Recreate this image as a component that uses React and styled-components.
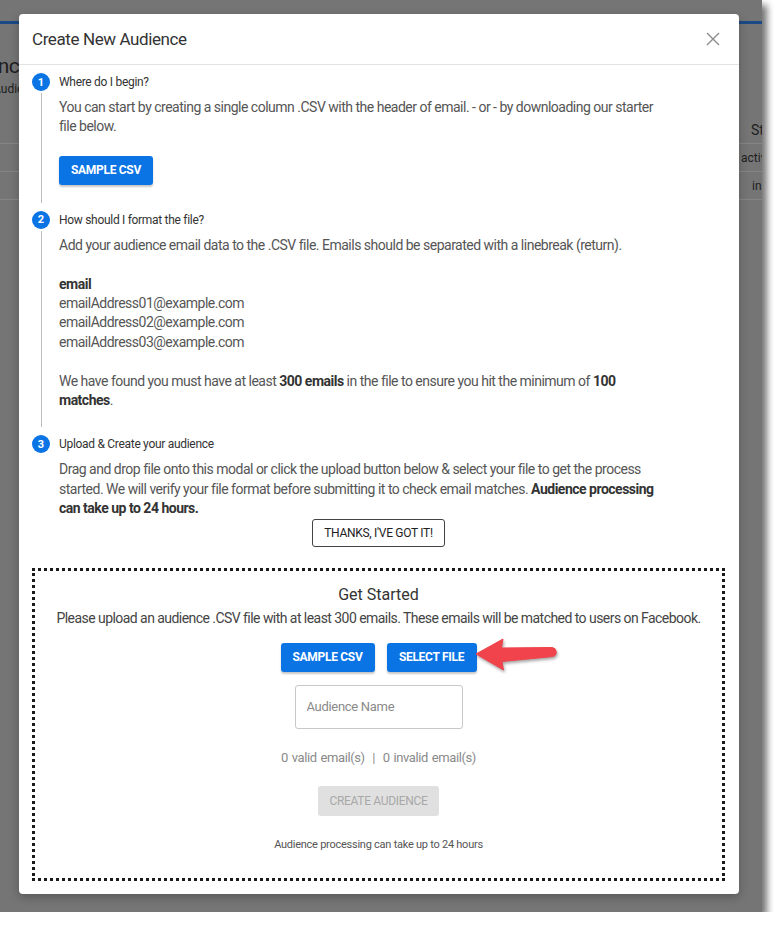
import React from 'react'
import styled, {createGlobalStyle} from 'styled-components'

const GlobalStyle = createGlobalStyle`
    html, body {
        margin: 0;
        padding: 0;
        background: #fff;
    }
    body {
        font-family: Roboto, 'Liberation Sans', Arial, sans-serif;
        -webkit-font-smoothing: antialiased;
    }
`

const Shot = styled.div`
    position: relative;
    width: 762px;
    height: 912px;
    background: #757575;
    box-shadow: 5px 5px 7px rgba(0, 0, 0, 0.55);
    overflow: hidden;
`

/* dimmed app page behind the modal */
const BehindPage = styled.div`
    display: flex;
    flex-direction: column;
    padding-top: 21px;
    color: #1e1e1e;
`
const TopBar = styled.div`
    height: 3px;
    background: #1c4a86;
`
const PageHead = styled.div`
    display: flex;
    flex-direction: column;
    margin-left: -53px;
    padding-top: 30px;
    h2 {
        margin: 0;
        font-size: 21px;
        font-weight: 400;
        letter-spacing: -0.5px;
    }
    p {
        margin: 4px 0 0 0;
        font-size: 12px;
        padding-left: 46px;
    }
`
const Table = styled.div`
    display: flex;
    flex-direction: column;
    margin-top: 21px;
`
const TRow = styled.div`
    display: flex;
    justify-content: flex-end;
    align-items: center;
    height: 27px;
    border-bottom: 1px solid #868686;
    font-size: ${p => (p.head ? '14px' : '12px')};
    &:first-child {
        height: 26px;
    }
`
const TCell = styled.span`
    width: ${p => p.w}px;
    white-space: nowrap;
    overflow: hidden;
`

const Modal = styled.div`
    position: absolute;
    left: 19px;
    top: 14px;
    width: 720px;
    height: 880px;
    background: #fff;
    border-radius: 4px;
    box-shadow: 0 3px 10px rgba(0, 0, 0, 0.25);
    display: flex;
    flex-direction: column;
`
const ModalHeader = styled.div`
    display: flex;
    align-items: center;
    justify-content: space-between;
    height: 50px;
    padding: 0 19px 0 13px;
    border-bottom: 1px solid #e3e3e3;
    h3 {
        margin: 0;
        font-size: 17px;
        font-weight: 400;
        color: #333;
        letter-spacing: -0.4px;
    }
`
const CloseBtn = styled.button`
    border: 0;
    background: none;
    padding: 0;
    width: 14px;
    height: 14px;
    display: flex;
    cursor: pointer;
`
const ModalBody = styled.div`
    display: flex;
    flex-direction: column;
    padding: 8px 14px 13px 13px;
    flex: 1;
`

const Step = styled.div`
    display: flex;
    flex-direction: column;
`
const StepHead = styled.div`
    display: flex;
    align-items: center;
    gap: 9px;
    height: 18px;
    font-size: 12px;
    color: #333;
    letter-spacing: -0.3px;
`
const StepNum = styled.span`
    width: 18px;
    height: 18px;
    border-radius: 50%;
    background: #0b74e5;
    color: #fff;
    font-size: 11px;
    font-weight: 700;
    display: flex;
    align-items: center;
    justify-content: center;
    letter-spacing: 0;
`
const StepBody = styled.div`
    margin: 2px 0 ${p => (p.last ? 0 : 8)}px 9px;
    padding: 5px 0 ${p => p.pb || 0}px 17px;
    border-left: 1px solid ${p => (p.last ? 'transparent' : '#bdbdbd')};
    font-size: 14px;
    line-height: 19.4px;
    color: #555;
    letter-spacing: -0.5px;
    p {
        margin: 0;
        max-width: 600px;
    }
    b {
        color: #333;
        font-weight: 700;
    }
`
const Spacer = styled.div`
    height: ${p => p.h}px;
`
const Centered = styled.div`
    display: flex;
    justify-content: center;
    gap: ${p => p.gap || 0}px;
    margin-left: ${p => p.shift || 0}px;
`

const Button = styled.button`
    height: 29px;
    width: ${p => p.w}px;
    border: 0;
    border-radius: 3px;
    background: #0b74e5;
    color: #fff;
    font-family: inherit;
    font-size: 12px;
    font-weight: 700;
    text-transform: uppercase;
    letter-spacing: -0.3px;
    box-shadow: 0 2px 2px rgba(0, 0, 0, 0.22);
    cursor: pointer;
    padding: 0;
`
const OutlineButton = styled(Button)`
    height: 28px;
    background: #fff;
    color: #222;
    border: 1px solid #444;
    font-weight: 400;
    box-shadow: none;
`
const DisabledButton = styled(Button)`
    height: 30px;
    background: #e0e0e0;
    color: #a8a8a8;
    font-weight: 400;
    box-shadow: none;
    cursor: default;
`

const DropZone = styled.div`
    margin-top: 21px;
    border: 3px dotted #1a1a1a;
    flex: 1;
    display: flex;
    flex-direction: column;
    align-items: center;
    padding-top: 13px;
    color: #444;
    h4 {
        margin: 0;
        font-size: 16px;
        font-weight: 400;
        color: #333;
        line-height: 22px;
    }
`
const Lead = styled.p`
    margin: 4px 0 17px 0;
    font-size: 14px;
    letter-spacing: -0.55px;
    color: #444;
`
const ArrowWrap = styled.span`
    position: relative;
    display: inline-flex;
`
const Arrow = styled.svg`
    position: absolute;
    top: -5px;
    left: calc(100% - 1px);
    width: 82px;
    height: 34px;
    overflow: visible;
    filter: drop-shadow(1px 2px 1.5px rgba(0, 0, 0, 0.35));
`
const NameInput = styled.input`
    margin-top: 13px;
    width: 168px;
    height: 44px;
    box-sizing: border-box;
    border: 1px solid #c8c8c8;
    border-radius: 3px;
    padding: 0 11px;
    font-family: inherit;
    font-size: 13px;
    letter-spacing: -0.3px;
    color: #333;
    &::placeholder {
        color: #8a8a8a;
    }
`
const Counts = styled.div`
    margin-top: 21px;
    font-size: 13px;
    color: #8a8a8a;
    letter-spacing: -0.4px;
    word-spacing: 1px;
`
const CreateRow = styled.div`
    margin-top: 21px;
    display: flex;
`
const Note = styled.div`
    margin-top: 22px;
    font-size: 11px;
    color: #555;
    letter-spacing: -0.25px;
`

export default function App() {
    return (
        <Shot>
            <GlobalStyle />
            <BehindPage>
                <TopBar />
                <PageHead>
                    <h2>Audiences</h2>
                    <p>Audiences</p>
                </PageHead>
                <Table>
                    <TRow head>
                        <TCell w={11}>Status</TCell>
                    </TRow>
                    <TRow>
                        <TCell w={21}>active</TCell>
                    </TRow>
                    <TRow>
                        <TCell w={10}>inactive</TCell>
                    </TRow>
                </Table>
            </BehindPage>

            <Modal>
                <ModalHeader>
                    <h3>Create New Audience</h3>
                    <CloseBtn aria-label="close">
                        <svg width="14" height="14" viewBox="0 0 14 14">
                            <path d="M1 1L13 13M13 1L1 13" stroke="#8c8c8c" strokeWidth="1.4" />
                        </svg>
                    </CloseBtn>
                </ModalHeader>
                <ModalBody>
                    <Step>
                        <StepHead>
                            <StepNum>1</StepNum>
                            Where do I begin?
                        </StepHead>
                        <StepBody pb={18}>
                            <p>
                                You can start by creating a single column .CSV with the header of
                                email. - or - by downloading our starter file below.
                            </p>
                            <Spacer h={19} />
                            <Button w={94}>Sample CSV</Button>
                        </StepBody>
                    </Step>
                    <Step>
                        <StepHead>
                            <StepNum>2</StepNum>
                            How should I format the file?
                        </StepHead>
                        <StepBody pb={17}>
                            <p>
                                Add your audience email data to the .CSV file. Emails should be
                                separated with a linebreak (return).
                            </p>
                            <br />
                            <p>
                                <b>email</b>
                                <br />
                                emailAddress01@example.com
                                <br />
                                emailAddress02@example.com
                                <br />
                                emailAddress03@example.com
                            </p>
                            <br />
                            <p>
                                We have found you must have at least <b>300 emails</b> in the file
                                to ensure you hit the minimum of <b>100 matches</b>.
                            </p>
                        </StepBody>
                    </Step>
                    <Step>
                        <StepHead>
                            <StepNum>3</StepNum>
                            Upload &amp; Create your audience
                        </StepHead>
                        <StepBody last>
                            <p>
                                Drag and drop file onto this modal or click the upload button below
                                &amp; select your file to get the process started. We will verify
                                your file format before submitting it to check email matches.{' '}
                                <b>Audience processing can take up to 24 hours.</b>
                            </p>
                            <Centered shift={-27}>
                                <OutlineButton w={133}>Thanks, I've got it!</OutlineButton>
                            </Centered>
                        </StepBody>
                    </Step>

                    <DropZone>
                        <h4>Get Started</h4>
                        <Lead>
                            Please upload an audience .CSV file with at least 300 emails. These
                            emails will be matched to users on Facebook.
                        </Lead>
                        <Centered gap={12}>
                            <Button w={94}>Sample CSV</Button>
                            <ArrowWrap>
                                <Button w={90}>Select File</Button>
                                <Arrow viewBox="0 0 82 34">
                                    <path
                                        d="M0 16 L27 1 L25.5 10 L76 9.5 A4.6 4.6 0 0 1 76.5 18.6 L26 23.5 L27.5 32 Z"
                                        fill="#f0434b"
                                        stroke="#f0434b"
                                        strokeWidth="1"
                                        strokeLinejoin="round"
                                    />
                                </Arrow>
                            </ArrowWrap>
                        </Centered>
                        <NameInput placeholder="Audience Name" />
                        <Counts>0 valid email(s) &nbsp;|&nbsp; 0 invalid email(s)</Counts>
                        <CreateRow>
                            <DisabledButton w={121}>Create Audience</DisabledButton>
                        </CreateRow>
                        <Note>Audience processing can take up to 24 hours</Note>
                    </DropZone>
                </ModalBody>
            </Modal>
        </Shot>
    )
}
